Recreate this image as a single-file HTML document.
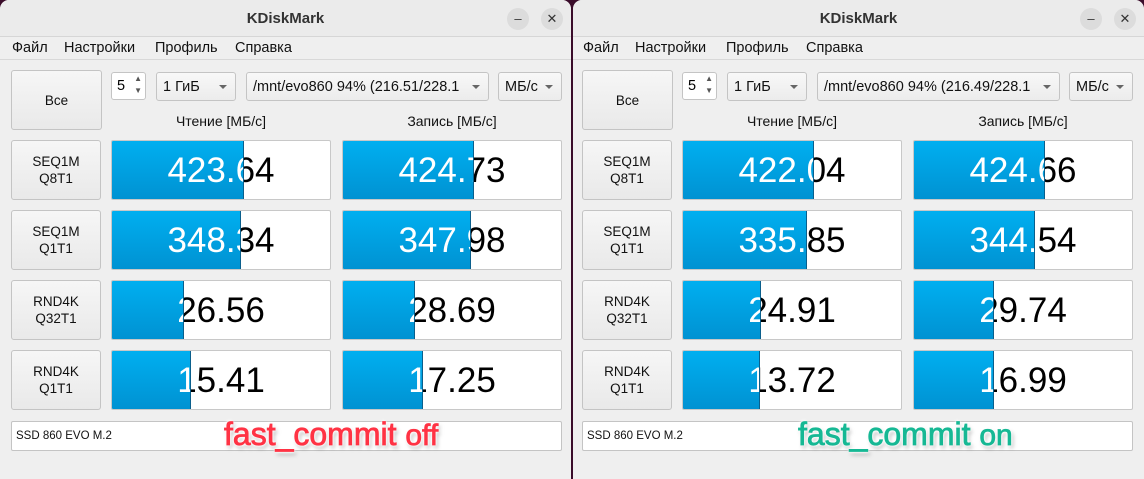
<!DOCTYPE html>
<html><head><meta charset="utf-8"><style>
*{box-sizing:border-box;margin:0;padding:0}
body{width:1144px;height:479px;background:#3a0c2a;position:relative;overflow:hidden;font-family:"Liberation Sans","DejaVu Sans",sans-serif;}
.win{position:absolute;top:0;height:479px;background:#efefef;border-radius:9px 9px 0 0;overflow:hidden}
.title{position:absolute;left:0;right:0;top:0;height:37px;background:#ebebeb;border-bottom:1px solid #d6d6d6;text-align:center;line-height:37px;font-weight:bold;font-size:15px;color:#333}
.wb{position:absolute;top:8px;width:22px;height:22px;border-radius:50%;background:#dcdcdc;color:#333;font-size:13px;line-height:22px;text-align:center;font-weight:normal}
.menu{position:absolute;left:0;right:0;top:37px;height:23px;border-bottom:1px solid #d8d8d8;font-size:14.5px;color:#111;line-height:23px}
.menu span{position:absolute}
.btn{position:absolute;background:linear-gradient(#f6f6f6,#e9e9e9);border:1px solid #c4c4c4;border-radius:3px;font-size:13.5px;color:#111;text-align:center;display:flex;align-items:center;justify-content:center;line-height:17px}
.cb{position:absolute;background:linear-gradient(#f8f8f8,#ececec);border:1px solid #c4c4c4;border-radius:3px;font-size:14.5px;color:#111;line-height:28px;padding-left:6px;white-space:nowrap;overflow:hidden}
.cb:after{content:"";position:absolute;right:8px;top:12px;border-left:4px solid transparent;border-right:4px solid transparent;border-top:4px solid #666}
.spin{position:absolute;background:#fff;border:1px solid #c4c4c4;border-radius:3px;font-size:14.5px;line-height:26px;padding-left:5px}
.hd{position:absolute;font-size:14px;color:#111;text-align:center;width:220px}
.bar{position:absolute;width:220px;height:60px;background:#fff;border:1px solid #c8c8c8;border-radius:2px;overflow:hidden}
.bar .t{position:absolute;left:0;top:0;width:218px;height:58px;text-align:center;font-size:35px;line-height:60px;color:#000}
.bar .f{position:absolute;left:0;top:0;height:58px;overflow:hidden;background:linear-gradient(#00aff0,#0092d2);border-right:1px solid #0a5f8c}
.bar .f .t{color:#fff}
.field{position:absolute;left:11px;top:421px;width:551px;height:30px;background:#fff;border:1px solid #c4c4c4;border-radius:2px;font-size:11.5px;line-height:28px;padding-left:4px;color:#111}
.ov{position:absolute;top:416px;font-size:32px;line-height:37px;font-weight:normal;white-space:nowrap;-webkit-text-stroke:0.8px currentColor;text-shadow:0 0 2px #fff,0 0 2px #fff,1px 1px 3px #fff,-1px -1px 3px #fff,2px 3px 4px rgba(0,0,0,.35)}
.ov small{font-size:30px}
</style></head><body>

<!-- LEFT -->
<div class="win" style="left:0;width:571px">
 <div class="title">KDiskMark<div class="wb" style="left:507px">–</div><div class="wb" style="left:541px">✕</div></div>
 <div class="menu"><span style="left:12px">Файл</span><span style="left:64px">Настройки</span><span style="left:155px">Профиль</span><span style="left:235px">Справка</span></div>
 <div class="btn" style="left:11px;top:70px;width:91px;height:60px">Все</div>
 <div class="spin" style="left:111px;top:72px;width:35px;height:28px">5<span style="position:absolute;right:3px;top:0;font-size:8px;line-height:12px;color:#555">▲<br>▼</span></div>
 <div class="cb" style="left:156px;top:72px;width:80px;height:29px">1 ГиБ</div>
 <div class="cb" style="left:246px;top:72px;width:243px;height:29px;padding-right:20px">/mnt/evo860 94% (216.51/228.1</div>
 <div class="cb" style="left:498px;top:72px;width:64px;height:29px">МБ/с</div>
 <div class="hd" style="left:111px;top:113px">Чтение [МБ/с]</div>
 <div class="hd" style="left:342px;top:113px">Запись [МБ/с]</div>
 <div class="btn" style="left:11px;top:140px;width:90px;height:60px">SEQ1M<br>Q8T1</div>
 <div class="btn" style="left:11px;top:210px;width:90px;height:60px">SEQ1M<br>Q1T1</div>
 <div class="btn" style="left:11px;top:280px;width:90px;height:60px">RND4K<br>Q32T1</div>
 <div class="btn" style="left:11px;top:350px;width:90px;height:60px">RND4K<br>Q1T1</div>
 <div class="bar" style="left:111px;top:140px"><div class="t">423.64</div><div class="f" style="width:132px"><div class="t">423.64</div></div></div>
 <div class="bar" style="left:342px;top:140px"><div class="t">424.73</div><div class="f" style="width:131px"><div class="t">424.73</div></div></div>
 <div class="bar" style="left:111px;top:210px"><div class="t">348.34</div><div class="f" style="width:129px"><div class="t">348.34</div></div></div>
 <div class="bar" style="left:342px;top:210px"><div class="t">347.98</div><div class="f" style="width:128px"><div class="t">347.98</div></div></div>
 <div class="bar" style="left:111px;top:280px"><div class="t">26.56</div><div class="f" style="width:72px"><div class="t">26.56</div></div></div>
 <div class="bar" style="left:342px;top:280px"><div class="t">28.69</div><div class="f" style="width:72px"><div class="t">28.69</div></div></div>
 <div class="bar" style="left:111px;top:350px"><div class="t">15.41</div><div class="f" style="width:79px"><div class="t">15.41</div></div></div>
 <div class="bar" style="left:342px;top:350px"><div class="t">17.25</div><div class="f" style="width:80px"><div class="t">17.25</div></div></div>
 <div class="field">SSD 860 EVO M.2</div>
 <div class="ov" style="left:224px;color:#ff3344">fast_commit <small>off</small></div>
</div>

<!-- RIGHT -->
<div class="win" style="left:573px;width:571px">
 <div class="title">KDiskMark<div class="wb" style="left:507px">–</div><div class="wb" style="left:541px">✕</div></div>
 <div class="menu"><span style="left:10px">Файл</span><span style="left:62px">Настройки</span><span style="left:153px">Профиль</span><span style="left:233px">Справка</span></div>
 <div class="btn" style="left:9px;top:70px;width:91px;height:60px">Все</div>
 <div class="spin" style="left:109px;top:72px;width:35px;height:28px">5<span style="position:absolute;right:3px;top:0;font-size:8px;line-height:12px;color:#555">▲<br>▼</span></div>
 <div class="cb" style="left:154px;top:72px;width:80px;height:29px">1 ГиБ</div>
 <div class="cb" style="left:244px;top:72px;width:243px;height:29px;padding-right:20px">/mnt/evo860 94% (216.49/228.1</div>
 <div class="cb" style="left:496px;top:72px;width:64px;height:29px">МБ/с</div>
 <div class="hd" style="left:109px;top:113px">Чтение [МБ/с]</div>
 <div class="hd" style="left:340px;top:113px">Запись [МБ/с]</div>
 <div class="btn" style="left:9px;top:140px;width:90px;height:60px">SEQ1M<br>Q8T1</div>
 <div class="btn" style="left:9px;top:210px;width:90px;height:60px">SEQ1M<br>Q1T1</div>
 <div class="btn" style="left:9px;top:280px;width:90px;height:60px">RND4K<br>Q32T1</div>
 <div class="btn" style="left:9px;top:350px;width:90px;height:60px">RND4K<br>Q1T1</div>
 <div class="bar" style="left:109px;top:140px"><div class="t">422.04</div><div class="f" style="width:131px"><div class="t">422.04</div></div></div>
 <div class="bar" style="left:340px;top:140px"><div class="t">424.66</div><div class="f" style="width:131px"><div class="t">424.66</div></div></div>
 <div class="bar" style="left:109px;top:210px"><div class="t">335.85</div><div class="f" style="width:124px"><div class="t">335.85</div></div></div>
 <div class="bar" style="left:340px;top:210px"><div class="t">344.54</div><div class="f" style="width:121px"><div class="t">344.54</div></div></div>
 <div class="bar" style="left:109px;top:280px"><div class="t">24.91</div><div class="f" style="width:78px"><div class="t">24.91</div></div></div>
 <div class="bar" style="left:340px;top:280px"><div class="t">29.74</div><div class="f" style="width:80px"><div class="t">29.74</div></div></div>
 <div class="bar" style="left:109px;top:350px"><div class="t">13.72</div><div class="f" style="width:77px"><div class="t">13.72</div></div></div>
 <div class="bar" style="left:340px;top:350px"><div class="t">16.99</div><div class="f" style="width:80px"><div class="t">16.99</div></div></div>
 <div class="field" style="left:9px">SSD 860 EVO M.2</div>
 <div class="ov" style="left:225px;color:#16b894">fast_commit <small>on</small></div>
</div>
</body></html>
